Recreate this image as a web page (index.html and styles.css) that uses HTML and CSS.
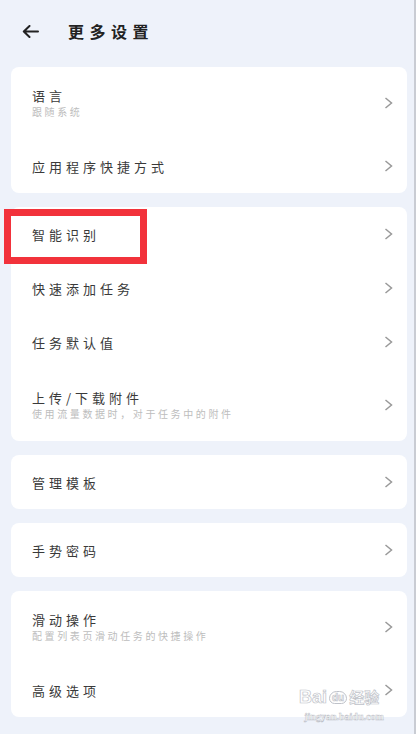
FILE: index.html
```html
<!DOCTYPE html>
<html lang="zh-CN">
<head>
    <meta charset="UTF-8">
    <meta name="viewport" content="width=device-width, initial-scale=1.0">
    <title>更多设置</title>
    <link rel="stylesheet" href="styles.css">
</head>
<body>
    <div class="header">
        <svg class="back" width="17" height="13" viewBox="0 0 17 13">
            <path d="M16 6.5H2 M7.5 1 L1.8 6.5 L7.5 12" fill="none" stroke="#222" stroke-width="2" stroke-linecap="round" stroke-linejoin="round"/>
        </svg>
        <h1 class="title">更多设置</h1>
    </div>

    <div class="list">
        <div class="card">
            <div class="row row-sub">
                <div class="text">
                    <div class="label">语言</div>
                    <div class="sub">跟随系统</div>
                </div>
                <svg class="chev" width="9" height="12" viewBox="0 0 9 12"><polyline points="1.5,1 7.5,6 1.5,11" fill="none" stroke="#999" stroke-width="1.5"/></svg>
            </div>
            <div class="row">
                <div class="label">应用程序快捷方式</div>
                <svg class="chev" width="9" height="12" viewBox="0 0 9 12"><polyline points="1.5,1 7.5,6 1.5,11" fill="none" stroke="#999" stroke-width="1.5"/></svg>
            </div>
        </div>

        <div class="card">
            <div class="row">
                <div class="label">智能识别</div>
                <svg class="chev" width="9" height="12" viewBox="0 0 9 12"><polyline points="1.5,1 7.5,6 1.5,11" fill="none" stroke="#999" stroke-width="1.5"/></svg>
                <div class="mark"></div>
            </div>
            <div class="row">
                <div class="label">快速添加任务</div>
                <svg class="chev" width="9" height="12" viewBox="0 0 9 12"><polyline points="1.5,1 7.5,6 1.5,11" fill="none" stroke="#999" stroke-width="1.5"/></svg>
            </div>
            <div class="row">
                <div class="label">任务默认值</div>
                <svg class="chev" width="9" height="12" viewBox="0 0 9 12"><polyline points="1.5,1 7.5,6 1.5,11" fill="none" stroke="#999" stroke-width="1.5"/></svg>
            </div>
            <div class="row row-sub">
                <div class="text">
                    <div class="label">上传/下载附件</div>
                    <div class="sub">使用流量数据时，对于任务中的附件</div>
                </div>
                <svg class="chev" width="9" height="12" viewBox="0 0 9 12"><polyline points="1.5,1 7.5,6 1.5,11" fill="none" stroke="#999" stroke-width="1.5"/></svg>
            </div>
        </div>

        <div class="card">
            <div class="row">
                <div class="label">管理模板</div>
                <svg class="chev" width="9" height="12" viewBox="0 0 9 12"><polyline points="1.5,1 7.5,6 1.5,11" fill="none" stroke="#999" stroke-width="1.5"/></svg>
            </div>
        </div>

        <div class="card">
            <div class="row">
                <div class="label">手势密码</div>
                <svg class="chev" width="9" height="12" viewBox="0 0 9 12"><polyline points="1.5,1 7.5,6 1.5,11" fill="none" stroke="#999" stroke-width="1.5"/></svg>
            </div>
        </div>

        <div class="card">
            <div class="row row-sub">
                <div class="text">
                    <div class="label">滑动操作</div>
                    <div class="sub">配置列表页滑动任务的快捷操作</div>
                </div>
                <svg class="chev" width="9" height="12" viewBox="0 0 9 12"><polyline points="1.5,1 7.5,6 1.5,11" fill="none" stroke="#999" stroke-width="1.5"/></svg>
            </div>
            <div class="row">
                <div class="label">高级选项</div>
                <svg class="chev" width="9" height="12" viewBox="0 0 9 12"><polyline points="1.5,1 7.5,6 1.5,11" fill="none" stroke="#999" stroke-width="1.5"/></svg>
            </div>
        </div>
    </div>

    <div class="watermark">
        <div class="wm-logo">
            <span>Bai</span>
            <span class="wm-du">du</span>
            <span class="wm-cn">经验</span>
        </div>
        <div class="wm-url">jingyan.baidu.com</div>
    </div>
</body>
</html>
```

FILE: styles.css
```css
body {
    margin: 0;
    background-color: #eef2fa;
    font-family: "Noto Sans CJK SC", "Noto Sans", sans-serif;
    color: #333;
    border-right: 2px solid #c9ccd3;
    min-height: 734px;
    box-sizing: border-box;
    position: relative;
}
.header {
    height: 62px;
    display: flex;
    align-items: center;
    padding-left: 22px;
}
.back {
    display: block;
}
.title {
    margin: 0 0 0 29px;
    font-size: 16px;
    font-weight: 700;
    letter-spacing: 5.5px;
    color: #222;
    line-height: 20px;
}
.list {
    display: flex;
    flex-direction: column;
    gap: 14px;
    padding: 5px 7px 0 11px;
}
.card {
    background-color: #fff;
    border-radius: 8px;
}
.row {
    position: relative;
    height: 54px;
    display: flex;
    align-items: center;
    justify-content: space-between;
    padding: 0 14px 0 21px;
}
.row-sub {
    height: 72px;
}
.label {
    font-size: 13px;
    line-height: 17px;
    letter-spacing: 4px;
    color: #3a3a3a;
}
.sub {
    margin-top: 1px;
    font-size: 10px;
    line-height: 14px;
    letter-spacing: 2.6px;
    color: #bdbdbd;
}
.chev {
    display: block;
    flex-shrink: 0;
}
.mark {
    position: absolute;
    left: -7px;
    top: 2px;
    width: 143px;
    height: 55px;
    box-sizing: border-box;
    border: 7px solid #f2323b;
}
.watermark {
    position: absolute;
    left: 299px;
    top: 688px;
    width: 90px;
    text-align: center;
    color: #fff;
    opacity: 0.9;
}
.wm-logo {
    display: flex;
    align-items: center;
    font-family: "Liberation Sans", Arial, sans-serif;
    font-weight: 700;
    font-size: 18px;
    line-height: 18px;
    -webkit-text-stroke: 0.7px #b9bcc4;
}
.wm-du {
    font-size: 10px;
    margin: 0 2px;
    padding: 0 2px;
    border: 1.5px solid #b9bcc4;
    border-radius: 8px 8px 6px 6px;
    line-height: 11px;
}
.wm-cn {
    font-family: "Noto Sans CJK SC", sans-serif;
    font-size: 15px;
}
.wm-url {
    margin-top: 5px;
    font-family: "Liberation Serif", serif;
    font-weight: 700;
    font-size: 10px;
    line-height: 11px;
    -webkit-text-stroke: 0.5px #b9bcc4;
}
```
